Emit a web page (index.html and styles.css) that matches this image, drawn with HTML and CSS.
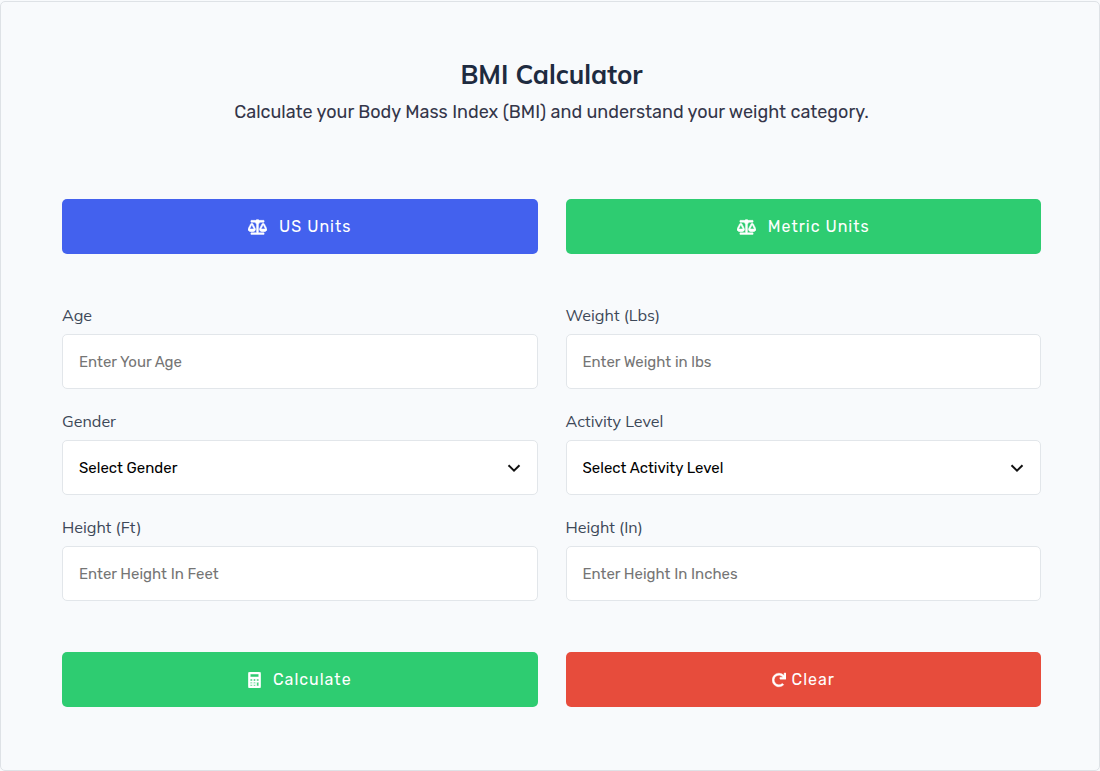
FILE: index.html
```html
<!DOCTYPE html>
<html lang="en">
<head>
    <meta charset="UTF-8">
    <meta name="viewport" content="width=device-width, initial-scale=1.0">
    <title>BMI Calculator</title>
    <link rel="stylesheet" href="styles.css">
</head>
<body>
    <main class="calculator">
        <header class="header">
            <h1>BMI Calculator</h1>
            <p>Calculate your Body Mass Index (BMI) and understand your weight category.</p>
        </header>
        <form id="bmi-form">
            <div class="row">
                <button type="button" class="btn btn-blue">
                    <svg class="icon-scale" viewBox="0 0 640 512" aria-hidden="true"><path d="M256 336h-.02c0-16.18 1.34-8.73-85.05-181.51-17.65-35.29-68.19-35.36-85.87 0C-2.06 328.75.02 320.33.02 336H0c0 44.18 57.31 80 128 80s128-35.82 128-80zM128 176l72 144H56l72-144zm511.98 160c0-16.18 1.34-8.73-85.05-181.51-17.65-35.29-68.19-35.36-85.87 0-87.12 174.26-85.04 165.84-85.04 181.51H384c0 44.18 57.31 80 128 80s128-35.82 128-80h-.02zM440 320l72-144 72 144H440zm88 128H352V153.25c23.51-10.29 41.16-31.48 46.39-57.25H528c8.84 0 16-7.16 16-16V48c0-8.84-7.16-16-16-16H383.64C369.04 12.68 346.09 0 320 0s-49.04 12.68-63.64 32H112c-8.84 0-16 7.16-16 16v32c0 8.84 7.16 16 16 16h129.61c5.23 25.76 22.87 46.96 46.39 57.25V448H112c-8.84 0-16 7.16-16 16v32c0 8.84 7.16 16 16 16h416c8.84 0 16-7.16 16-16v-32c0-8.84-7.16-16-16-16z"/></svg>
                    US Units
                </button>
                <button type="button" class="btn btn-green">
                    <svg class="icon-scale" viewBox="0 0 640 512" aria-hidden="true"><path d="M256 336h-.02c0-16.18 1.34-8.73-85.05-181.51-17.65-35.29-68.19-35.36-85.87 0C-2.06 328.75.02 320.33.02 336H0c0 44.18 57.31 80 128 80s128-35.82 128-80zM128 176l72 144H56l72-144zm511.98 160c0-16.18 1.34-8.73-85.05-181.51-17.65-35.29-68.19-35.36-85.87 0-87.12 174.26-85.04 165.84-85.04 181.51H384c0 44.18 57.31 80 128 80s128-35.82 128-80h-.02zM440 320l72-144 72 144H440zm88 128H352V153.25c23.51-10.29 41.16-31.48 46.39-57.25H528c8.84 0 16-7.16 16-16V48c0-8.84-7.16-16-16-16H383.64C369.04 12.68 346.09 0 320 0s-49.04 12.68-63.64 32H112c-8.84 0-16 7.16-16 16v32c0 8.84 7.16 16 16 16h129.61c5.23 25.76 22.87 46.96 46.39 57.25V448H112c-8.84 0-16 7.16-16 16v32c0 8.84 7.16 16 16 16h416c8.84 0 16-7.16 16-16v-32c0-8.84-7.16-16-16-16z"/></svg>
                    Metric Units
                </button>
            </div>
            <div class="row fields">
                <div class="field">
                    <label for="age">Age</label>
                    <input type="text" inputmode="numeric" id="age" placeholder="Enter Your Age">
                </div>
                <div class="field">
                    <label for="weight">Weight (Lbs)</label>
                    <input type="text" inputmode="decimal" id="weight" placeholder="Enter Weight in lbs">
                </div>
                <div class="field">
                    <label for="gender">Gender</label>
                    <div class="select-box">
                        <select id="gender">
                            <option value="">Select Gender</option>
                            <option value="male">Male</option>
                            <option value="female">Female</option>
                        </select>
                        <svg class="chevron" viewBox="0 0 14 8" aria-hidden="true"><path d="M1.5 1.2 7 6.6l5.5-5.4"/></svg>
                    </div>
                </div>
                <div class="field">
                    <label for="activity">Activity Level</label>
                    <div class="select-box">
                        <select id="activity">
                            <option value="">Select Activity Level</option>
                            <option value="low">Low</option>
                            <option value="moderate">Moderate</option>
                            <option value="high">High</option>
                        </select>
                        <svg class="chevron" viewBox="0 0 14 8" aria-hidden="true"><path d="M1.5 1.2 7 6.6l5.5-5.4"/></svg>
                    </div>
                </div>
                <div class="field">
                    <label for="feet">Height (Ft)</label>
                    <input type="text" inputmode="numeric" id="feet" placeholder="Enter Height In Feet">
                </div>
                <div class="field">
                    <label for="inches">Height (In)</label>
                    <input type="text" inputmode="numeric" id="inches" placeholder="Enter Height In Inches">
                </div>
            </div>
            <div class="row">
                <button type="button" class="btn btn-green">
                    <svg class="icon-calc" viewBox="0 0 400 512" aria-hidden="true"><path fill-rule="evenodd" d="M48 0h304q48 0 48 48v416q0 48-48 48H48q-48 0-48-48V48Q0 0 48 0zM64 64v96h272V64zM64 224v64h64v-64zM168 224v64h64v-64zM272 224v64h64v-64zM64 328v40h64v-40zM168 328v40h64v-40zM272 328v120h64V328zM64 408v40h64v-40zM168 408v40h64v-40z"/></svg>
                    Calculate
                </button>
                <button type="reset" class="btn btn-red">
                    <svg class="icon-redo" viewBox="0 0 512 512" aria-hidden="true"><path d="M500.33 0h-47.41a12 12 0 0 0-12 12.57l4 82.76A247.42 247.42 0 0 0 256 8C119.34 8 7.9 119.53 8 256.19 8.1 393.07 119.1 504 256 504a247.1 247.1 0 0 0 166.18-63.91 12 12 0 0 0 .48-17.43l-34-34a12 12 0 0 0-16.38-.55A176 176 0 1 1 402.1 157.8l-101.53-4.87a12 12 0 0 0-12.57 12v47.41a12 12 0 0 0 12 12h200.33a12 12 0 0 0 12-12V12a12 12 0 0 0-12-12z"/></svg>
                    Clear
                </button>
            </div>
        </form>
    </main>
</body>
</html>
```
FILE: styles.css
```css
* {
    margin: 0;
    padding: 0;
    box-sizing: border-box;
}

body {
    font-family: Rubik, Roboto, sans-serif;
    background: #f8fafc;
    color: #34364a;
    padding-top: 1px;
}

.calculator {
    background: #f8fafc;
    border: 1px solid #dee2e6;
    border-radius: 5px;
    padding: 55px 58px 63px 61px;
}

.header {
    text-align: center;
    margin-bottom: 71px;
}

.header h1 {
    font-family: Mulish, Nunito, "Noto Sans", sans-serif;
    font-size: 26px;
    font-weight: 700;
    line-height: 36px;
    color: #1e2b40;
}

.header p {
    margin-top: 3px;
    font-size: 18px;
    line-height: 32px;
}

.row {
    display: grid;
    grid-template-columns: 1fr 1fr;
    gap: 24px 28px;
}

.fields {
    margin: 53px 0 51px;
}

.field label {
    display: block;
    height: 27px;
    font-family: Mulish, Nunito, "Noto Sans", sans-serif;
    font-size: 16px;
    line-height: 17px;
    color: #3d4858;
}

.field input,
.field select {
    display: block;
    width: 100%;
    height: 55px;
    padding: 0 16px;
    background: #fff;
    border: 1px solid #e2e6ea;
    border-radius: 5px;
    font-family: inherit;
    font-size: 15px;
    color: #000;
    outline: none;
}

.field input::placeholder {
    color: #757575;
}

.select-box {
    position: relative;
}

.field select {
    appearance: none;
}

.chevron {
    position: absolute;
    top: 24px;
    right: 17px;
    width: 14px;
    height: 8px;
    fill: none;
    stroke: #111;
    stroke-width: 2;
    pointer-events: none;
}

.btn {
    display: flex;
    align-items: center;
    justify-content: center;
    height: 55px;
    border: none;
    border-radius: 5px;
    font-family: inherit;
    font-size: 16px;
    font-weight: 400;
    letter-spacing: 1px;
    color: #fff;
    cursor: pointer;
}

.btn svg {
    height: 16px;
    fill: #fff;
    stroke: #fff;
    stroke-width: 16;
}

.btn-blue {
    background: #4361ee;
}

.btn-green {
    background: #2ecc71;
}

.btn-red {
    background: #e74c3c;
}

.icon-scale {
    width: 19px;
    margin-right: 12px;
}

.icon-calc {
    width: 13px;
    margin-right: 12px;
}

.icon-redo {
    width: 14px;
    margin-right: 6px;
}
```
